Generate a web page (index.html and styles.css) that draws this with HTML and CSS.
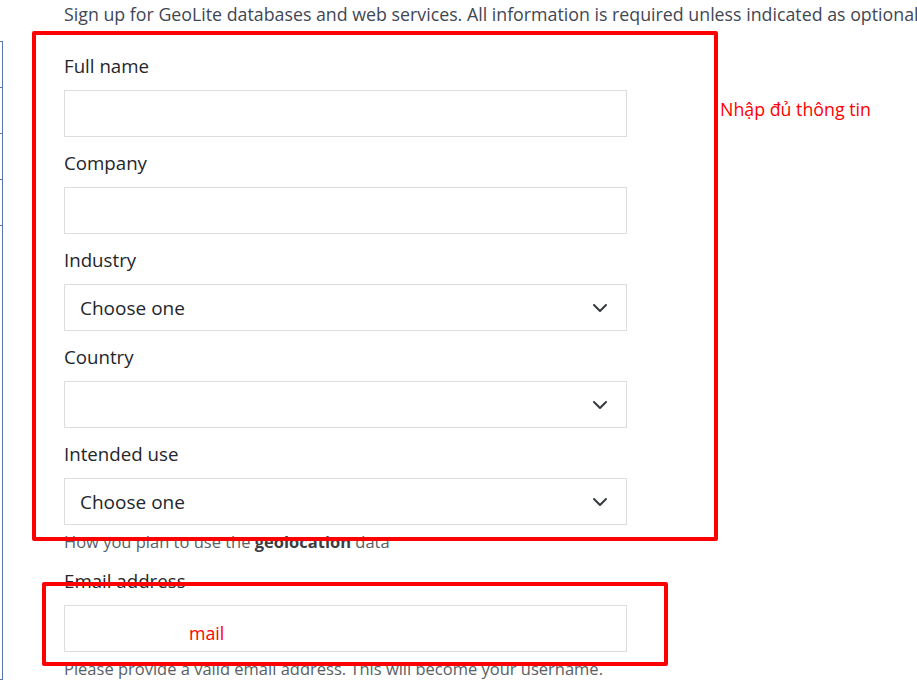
FILE: index.html
```html
<!DOCTYPE html>
<html lang="en">
<head>
    <meta charset="UTF-8">
    <meta name="viewport" content="width=device-width, initial-scale=1.0">
    <title>Sign up for GeoLite</title>
    <link rel="stylesheet" href="styles.css">
</head>
<body>

    <div class="page">
        <!-- side menu, cut off at the left edge -->
        <ul class="side-menu">
            <li class="side-item"></li>
            <li class="side-item"></li>
            <li class="side-item"></li>
            <li class="side-item"></li>
            <li class="side-item"></li>
        </ul>

        <main class="main">
            <p class="intro">Sign up for GeoLite databases and web services. All information is required unless indicated as optional</p>

            <form class="signup-form">
                <div class="field">
                    <label class="field-label">Full name</label>
                    <div class="text-input"></div>
                </div>

                <div class="field">
                    <label class="field-label">Company</label>
                    <div class="text-input"></div>
                </div>

                <div class="field">
                    <label class="field-label">Industry</label>
                    <div class="select-input">
                        <span>Choose one</span>
                        <svg class="chevron" width="16" height="10" viewBox="0 0 16 10"><path d="M2 2l6 6 6-6" fill="none" stroke="#343a40" stroke-width="2" stroke-linecap="round" stroke-linejoin="round"/></svg>
                    </div>
                </div>

                <div class="field">
                    <label class="field-label">Country</label>
                    <div class="select-input">
                        <span></span>
                        <svg class="chevron" width="16" height="10" viewBox="0 0 16 10"><path d="M2 2l6 6 6-6" fill="none" stroke="#343a40" stroke-width="2" stroke-linecap="round" stroke-linejoin="round"/></svg>
                    </div>
                </div>

                <div class="field">
                    <label class="field-label">Intended use</label>
                    <div class="select-input">
                        <span>Choose one</span>
                        <svg class="chevron" width="16" height="10" viewBox="0 0 16 10"><path d="M2 2l6 6 6-6" fill="none" stroke="#343a40" stroke-width="2" stroke-linecap="round" stroke-linejoin="round"/></svg>
                    </div>
                    <p class="help-text">How you plan to use the <b>geolocation</b> data</p>
                </div>

                <div class="field field-email">
                    <label class="field-label">Email address</label>
                    <div class="text-input"></div>
                    <p class="help-text">Please provide a valid email address. This will become your username.</p>
                </div>
            </form>
        </main>
    </div>

    <!-- red annotations drawn over the screenshot -->
    <div class="mark mark-form"></div>
    <div class="mark mark-email"></div>
    <span class="note note-form">Nhập đủ thông tin</span>
    <span class="note note-email">mail</span>

</body>
</html>
```

FILE: styles.css
```css
/* Basic reset */
* {
    margin: 0;
    padding: 0;
    box-sizing: border-box;
}

body {
    font-family: 'Open Sans', 'Noto Sans', sans-serif;
    background-color: #ffffff;
    color: #212529;
    overflow: hidden;
}

.page {
    display: flex;
    position: relative;
}

/* Side menu stub */
.side-menu {
    list-style-type: none;
    width: 3px;
    margin-top: 41px;
    border-right: 1px solid #5677a8;
    border-bottom: 1px solid #5677a8;
}

.side-item {
    height: 46px;
    border-top: 1px solid #5677a8;
}

/* Main column */
.main {
    padding-left: 61px;
    min-width: 0;
    flex: 1;
}

.intro {
    margin-top: 2px;
    font-size: 17.8px;
    line-height: 24px;
    color: #3f4755;
    white-space: nowrap;
}

.signup-form {
    margin-top: 28px;
    width: 563px;
}

.field + .field {
    margin-top: 14px;
}

.field-email {
    margin-top: 16px !important;
}

.field-label {
    display: block;
    font-size: 18.7px;
    line-height: 24px;
    color: #23262b;
    margin-bottom: 12px;
}

.text-input,
.select-input {
    height: 47px;
    border: 1px solid #dcdde1;
    background-color: #fff;
}

.select-input {
    display: flex;
    align-items: center;
    justify-content: space-between;
    padding: 0 18px 0 15px;
    font-size: 19px;
    color: #23262b;
}

.chevron {
    display: block;
}

.help-text {
    margin-top: 6px;
    font-size: 16.5px;
    line-height: 22px;
    color: #5a5f66;
}

.help-text b {
    color: #3a3d42;
}

/* Annotations */
.mark {
    position: absolute;
    border: 4px solid #ff0000;
    border-radius: 2px;
}

.mark-form {
    left: 32px;
    top: 31px;
    width: 686px;
    height: 510px;
}

.mark-email {
    left: 42px;
    top: 582px;
    width: 626px;
    height: 84px;
}

.note {
    position: absolute;
    color: #ff0000;
    font-size: 17.8px;
    line-height: 20px;
}

.note-form {
    left: 720px;
    top: 99px;
}

.note-email {
    left: 189px;
    top: 623px;
}
```
